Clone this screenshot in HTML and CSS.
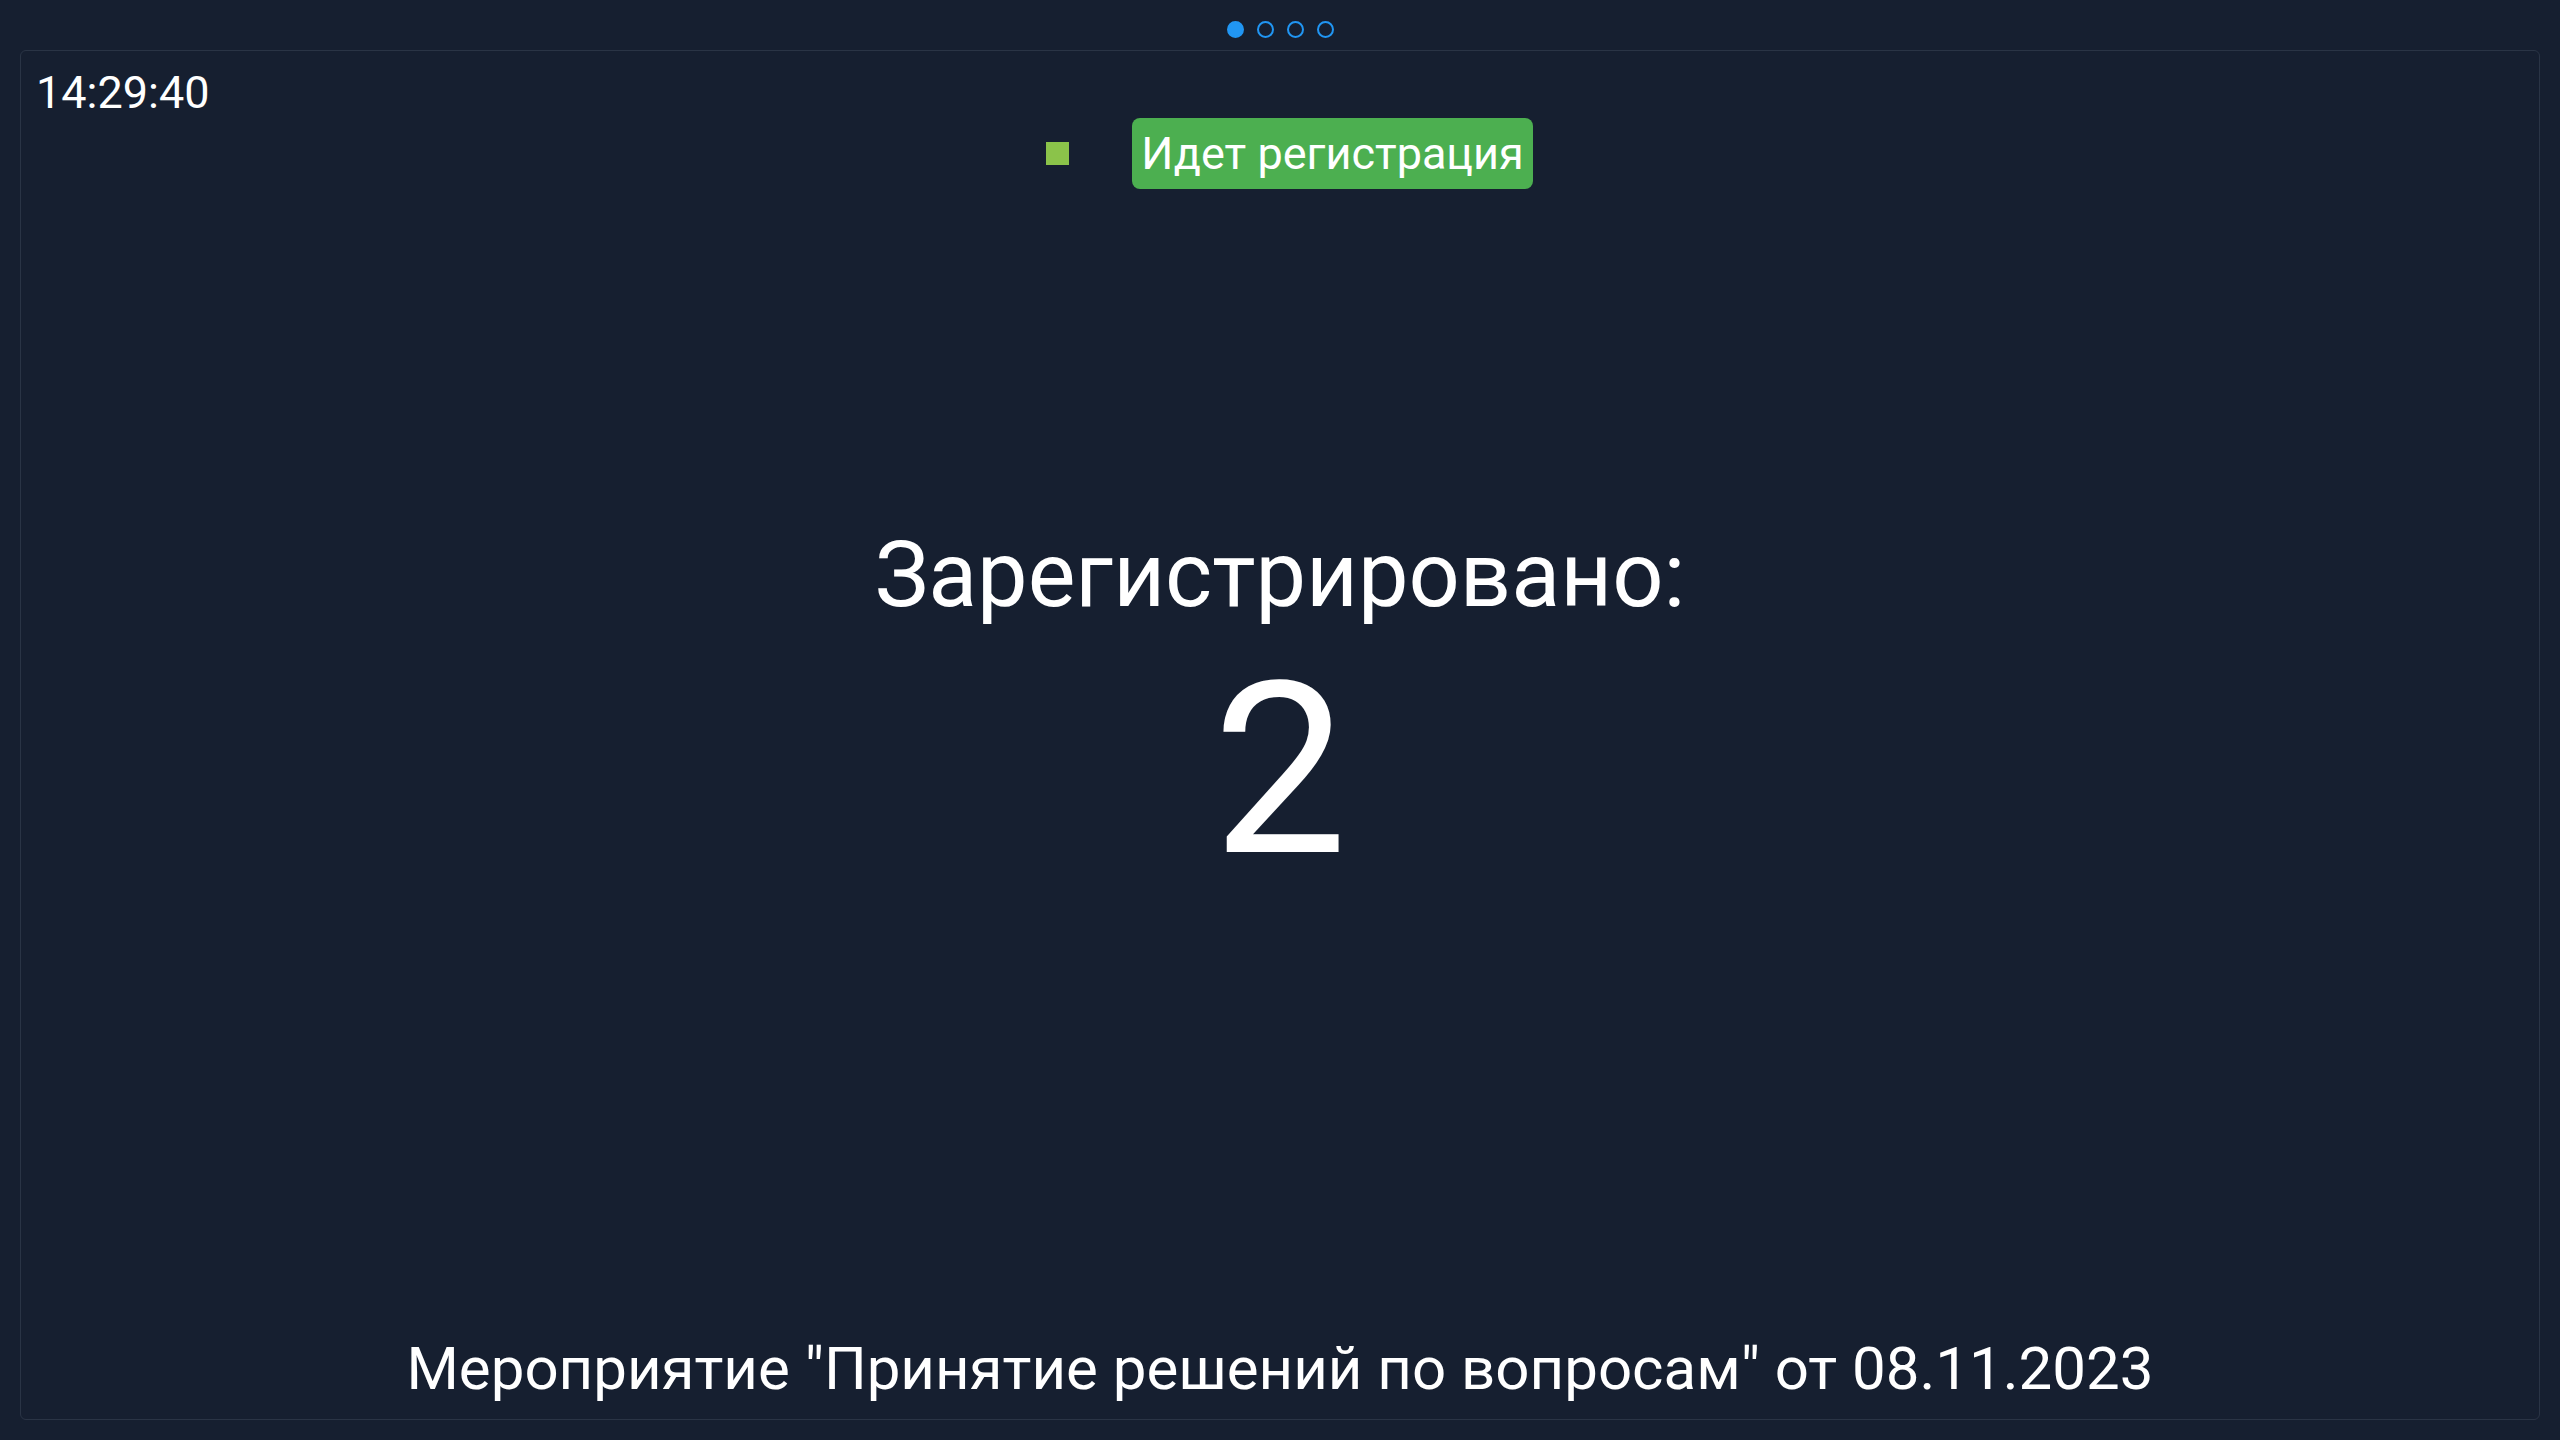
FILE: index.html
```html
<!DOCTYPE html>
<html lang="ru">
<head>
<meta charset="utf-8">
<title>Регистрация</title>
<link rel="stylesheet" href="styles.css">
</head>
<body>
<div class="dots">
  <span class="dot dot-active"></span>
  <span class="dot"></span>
  <span class="dot"></span>
  <span class="dot"></span>
</div>
<div class="frame">
  <div class="clock">14:29:40</div>
  <div class="status-row">
    <span class="swatch"></span>
    <span class="badge">Идет регистрация</span>
  </div>
  <div class="main">
    <div class="label">Зарегистрировано:</div>
    <div class="count">2</div>
  </div>
  <div class="footer">Мероприятие "Принятие решений по вопросам" от 08.11.2023</div>
</div>
</body>
</html>
```
FILE: styles.css
```css
html, body {
  margin: 0;
  padding: 0;
  background: #161f30;
  color: #ffffff;
  font-family: Roboto, "Noto Sans", "Liberation Sans", sans-serif;
  width: 2560px;
  height: 1440px;
  overflow: hidden;
}

.dots {
  box-sizing: border-box;
  height: 50px;
  padding-top: 21px;
  display: flex;
  justify-content: center;
  align-items: flex-start;
  gap: 13px;
}

.dot {
  box-sizing: border-box;
  width: 17px;
  height: 17px;
  border-radius: 50%;
  border: 2px solid #2196f3;
}

.dot-active {
  background: #2196f3;
}

.frame {
  box-sizing: border-box;
  margin: 0 20px;
  height: 1370px;
  border: 1px solid #2a3445;
  border-radius: 6px;
  display: flex;
  flex-direction: column;
}

.clock {
  padding: 16px 0 0 15px;
  font-size: 45px;
  line-height: 51px;
}

.status-row {
  display: flex;
  justify-content: center;
  align-items: center;
  gap: 63px;
  padding-left: 19px;
}

.swatch {
  width: 23px;
  height: 23px;
  background: #8bc34a;
}

.badge {
  background: #4caf50;
  border-radius: 8px;
  padding: 8px 9px;
  font-size: 45px;
  line-height: 55px;
}

.main {
  margin-top: 333px;
  text-align: center;
}

.label {
  font-size: 90px;
  line-height: 108px;
}

.count {
  font-size: 240px;
  line-height: 281px;
}

.footer {
  margin-top: auto;
  padding-bottom: 16px;
  text-align: center;
  font-size: 60px;
  line-height: 68px;
}
```
